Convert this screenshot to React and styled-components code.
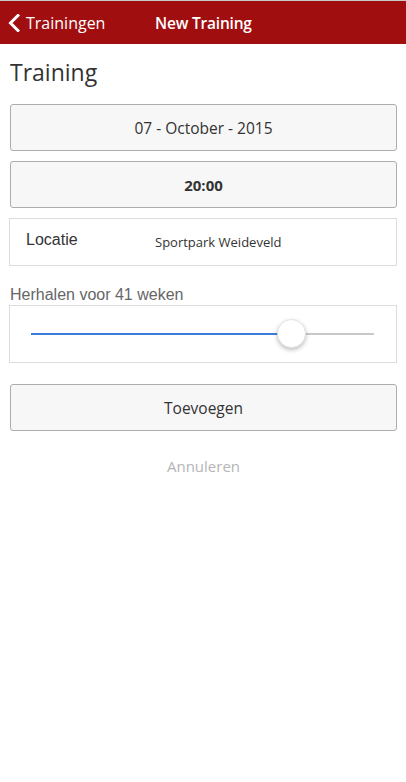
import React from 'react';
import styled, { createGlobalStyle } from 'styled-components';

const GlobalStyle = createGlobalStyle`
  html, body {
    margin: 0;
    padding: 0;
    background: #ffffff;
  }
  body {
    font-family: "Open Sans", "Noto Sans", sans-serif;
    color: #333333;
  }
  * {
    box-sizing: border-box;
  }
`;

const Page = styled.div`
  width: 406px;
  min-height: 782px;
  border-top: 1px solid #c9c9c9;
  background: #ffffff;
`;

const NavBar = styled.header`
  height: 43px;
  background: #a10e10;
  display: flex;
  align-items: center;
  color: #ffffff;
`;

const BackLink = styled.div`
  display: flex;
  align-items: center;
  gap: 6px;
  padding-left: 8px;
  width: 155px;
  font-size: 16px;
`;

const NavTitle = styled.div`
  font-size: 15.5px;
  font-weight: 600;
  letter-spacing: -0.2px;
`;

const Content = styled.main`
  padding: 0 9px 0 10px;
  display: flex;
  flex-direction: column;
`;

const Heading = styled.h1`
  margin: 15px 0 19px 0;
  font-size: 23px;
  font-weight: 400;
  color: #333333;
  line-height: 26px;
`;

const Button = styled.button`
  height: 47px;
  width: 100%;
  margin-bottom: ${p => p.$gap || 10}px;
  border: 1px solid #adadad;
  border-radius: 3px;
  background: #f7f7f7;
  font-family: "Open Sans", "Noto Sans", sans-serif;
  font-size: ${p => (p.$bold ? 15 : 15.5)}px;
  font-weight: ${p => (p.$bold ? 700 : 400)};
  color: #333333;
`;

const Card = styled.div`
  margin-left: -1px;
  border: 1px solid #dddddd;
  background: #ffffff;
`;

const LocationCard = styled(Card)`
  height: 48px;
  display: flex;
  align-items: center;
  margin-bottom: 20px;
`;

const FieldLabel = styled.span`
  width: 145px;
  padding-left: 16px;
  font-family: "Liberation Sans", Arial, sans-serif;
  font-size: 16px;
  color: #333333;
  margin-top: -4px;
`;

const FieldValue = styled.span`
  font-size: 13px;
  color: #333333;
`;

const RepeatLabel = styled.div`
  font-family: "Liberation Sans", Arial, sans-serif;
  font-size: 16px;
  color: #666666;
  line-height: 18px;
  margin-bottom: 1px;
`;

const SliderCard = styled(Card)`
  height: 58px;
  padding: 0 22px 0 21px;
  display: flex;
  align-items: center;
  margin-bottom: 21px;
`;

const Track = styled.div`
  position: relative;
  flex: 1;
  height: 2px;
  background: #c8c8c8;
`;

const Fill = styled.div`
  height: 2px;
  background: #3b7ddd;
`;

const Thumb = styled.div`
  position: absolute;
  top: -14px;
  width: 29px;
  height: 29px;
  margin-left: -14px;
  border-radius: 50%;
  background: #ffffff;
  border: 1px solid #e3e3e3;
  box-shadow: 0 2px 4px rgba(0, 0, 0, 0.25);
`;

const CancelLink = styled.div`
  text-align: center;
  margin-top: 15px;
  font-size: 15px;
  color: #b5b5b5;
`;

const Chevron = () => (
  <svg width="12" height="18" viewBox="0 0 12 18">
    <path d="M10 1.5 L2.5 9 L10 16.5" stroke="#ffffff" strokeWidth="3" fill="none" strokeLinecap="square" />
  </svg>
);

const App = () => {
  const value = 0.758;
  return (
    <Page>
      <GlobalStyle />
      <NavBar>
        <BackLink>
          <Chevron />
          <span>Trainingen</span>
        </BackLink>
        <NavTitle>New Training</NavTitle>
      </NavBar>
      <Content>
        <Heading>Training</Heading>
        <Button>07 - October - 2015</Button>
        <Button $bold>20:00</Button>
        <LocationCard>
          <FieldLabel>Locatie</FieldLabel>
          <FieldValue>Sportpark Weideveld</FieldValue>
        </LocationCard>
        <RepeatLabel>Herhalen voor 41 weken</RepeatLabel>
        <SliderCard>
          <Track>
            <Fill style={{ width: `${value * 100}%` }} />
            <Thumb style={{ left: `${value * 100}%` }} />
          </Track>
        </SliderCard>
        <Button>Toevoegen</Button>
        <CancelLink>Annuleren</CancelLink>
      </Content>
    </Page>
  );
};

export default App;
